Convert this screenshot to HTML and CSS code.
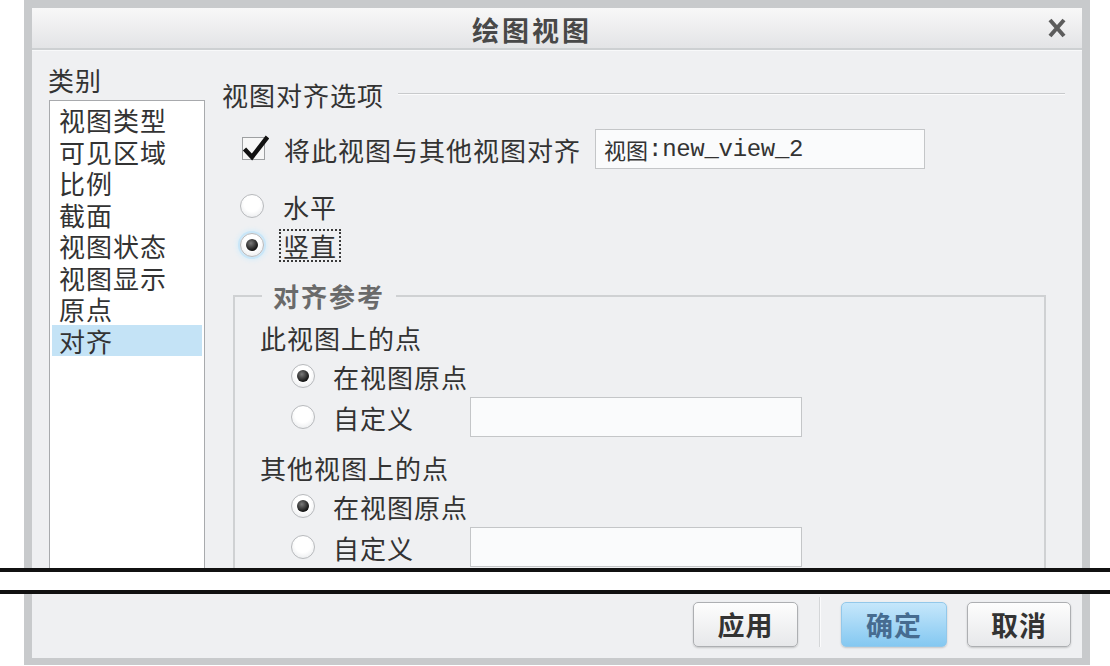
FILE: index.html
```html
<!DOCTYPE html>
<html lang="zh-CN">
<head>
    <meta charset="UTF-8">
    <title>绘图视图</title>
    <link rel="stylesheet" href="styles.css">
</head>
<body>
    <div class="dialog dialog-top">
        <div class="titlebar">
            <div class="title">绘图视图</div>
            <div class="close">
                <svg width="20" height="20" viewBox="0 0 20 20">
                    <path d="M3 2 L17 18 M17 2 L3 18" stroke="#5c5c5c" stroke-width="4" fill="none"/>
                </svg>
            </div>
        </div>
        <div class="content">
            <div class="sidebar">
                <div class="side-label">类别</div>
                <ul class="cat-list">
                    <li>视图类型</li>
                    <li>可见区域</li>
                    <li>比例</li>
                    <li>截面</li>
                    <li>视图状态</li>
                    <li>视图显示</li>
                    <li>原点</li>
                    <li class="selected">对齐</li>
                </ul>
            </div>
            <div class="main">
                <div class="section-head">
                    <span>视图对齐选项</span>
                    <div class="rule"></div>
                </div>
                <div class="check-row">
                    <svg class="checkbox" width="27" height="30" viewBox="0 0 27 30">
                        <rect x="0.5" y="3.5" width="22" height="22" fill="#f7f7f7" stroke="#9ea0a2"/>
                        <path d="M2.5 15 L10 23 L25.5 3" fill="none" stroke="#111" stroke-width="4.5"/>
                    </svg>
                    <span>将此视图与其他视图对齐</span>
                    <div class="field view-field"><span class="field-cjk">视图</span><span class="mono">:new_view_2</span></div>
                </div>
                <div class="radio-row first">
                    <span class="radio"></span>
                    <span>水平</span>
                </div>
                <div class="radio-row second">
                    <span class="radio on focus"></span>
                    <span class="focus-label">竖直</span>
                </div>
                <fieldset class="group">
                    <legend>对齐参考</legend>
                    <div class="group-label">此视图上的点</div>
                    <div class="opt-row">
                        <span class="radio on"></span>
                        <span class="opt-text">在视图原点</span>
                    </div>
                    <div class="opt-row input-row">
                        <span class="radio"></span>
                        <span class="opt-text">自定义</span>
                        <div class="field"></div>
                    </div>
                    <div class="group-label next">其他视图上的点</div>
                    <div class="opt-row">
                        <span class="radio on"></span>
                        <span class="opt-text">在视图原点</span>
                    </div>
                    <div class="opt-row input-row">
                        <span class="radio"></span>
                        <span class="opt-text">自定义</span>
                        <div class="field"></div>
                    </div>
                </fieldset>
            </div>
        </div>
    </div>

    <div class="cut"></div>

    <div class="dialog dialog-bottom">
        <div class="footer">
            <button class="btn">应用</button>
            <div class="btn-sep"></div>
            <button class="btn primary">确定</button>
            <button class="btn last">取消</button>
        </div>
    </div>
</body>
</html>
```

FILE: styles.css
```css
body {
    margin: 0;
    padding: 0;
    background: #fff;
    font-family: "Noto Sans CJK SC", "Liberation Sans", sans-serif;
    color: #333;
    width: 1110px;
    height: 666px;
    overflow: hidden;
}

.dialog {
    margin-left: 24px;
    width: 1066px;
    box-sizing: border-box;
    border-left: 8px solid #c8cacc;
    border-right: 8px solid #c8cacc;
    background: #eff0f2;
}

.dialog-top {
    height: 568px;
    border-top: 8px solid #c8cacc;
    overflow: hidden;
}

.dialog-bottom {
    height: 71px;
    border-bottom: 7px solid #c8cacc;
}

.titlebar {
    display: flex;
    height: 40px;
    border-bottom: 2px solid #cdd0d2;
    background: linear-gradient(#f8f8f8, #e3e4e6);
}

.title {
    flex: 1;
    text-align: center;
    font-size: 27px;
    font-weight: bold;
    line-height: 40px;
    letter-spacing: 3px;
    color: #484848;
    padding-top: 2px;
}

.close {
    width: 50px;
    display: flex;
    align-items: center;
    justify-content: center;
}

.content {
    display: flex;
    height: 518px;
    padding: 0 17px 0 16px;
    border-top: 1px solid #f8f9fa;
}

.sidebar {
    width: 157px;
    padding-top: 14px;
}

.side-label {
    font-size: 26px;
    line-height: 30px;
    letter-spacing: 1px;
}

.cat-list {
    list-style-type: none;
    margin: 5px 0 0 1px;
    padding: 3px 2px;
    height: 480px;
    background: #fff;
    border: 1px solid #a8aaad;
}

.cat-list li {
    height: 31.5px;
    line-height: 31.5px;
    padding-left: 7px;
    font-size: 26px;
    letter-spacing: 1px;
}

.cat-list li.selected {
    background: #c4e3f6;
}

.main {
    width: 843px;
    margin-left: 17px;
    padding-top: 28px;
    font-size: 26px;
    letter-spacing: 1px;
}

.section-head {
    display: flex;
    align-items: center;
    height: 30px;
}

.section-head .rule {
    flex: 1;
    margin-left: 14px;
    border-top: 1px solid #c8cacc;
    border-bottom: 1px solid #fbfbfc;
}

.check-row {
    display: flex;
    align-items: center;
    height: 40px;
    margin-top: 20px;
    padding-left: 20px;
}

.checkbox {
    margin-right: 15px;
}

.field {
    box-sizing: border-box;
    height: 40px;
    width: 332px;
    background: #fafbfc;
    border: 1px solid #c4c6c8;
}

.view-field {
    width: 330px;
    margin-left: 14px;
    display: flex;
    align-items: center;
    padding-left: 8px;
    letter-spacing: 0;
}

.field-cjk {
    font-size: 22px;
}

.mono {
    font-family: "Liberation Mono", monospace;
    font-size: 24px;
    letter-spacing: -0.3px;
}

.radio-row {
    display: flex;
    align-items: center;
    height: 36px;
    padding-left: 18px;
}

.radio-row.first {
    margin-top: 19px;
}

.radio-row.second {
    margin-top: 3px;
}

.radio-row .radio {
    margin-right: 19px;
}

.radio {
    display: inline-block;
    position: relative;
    flex: none;
    box-sizing: border-box;
    width: 24px;
    height: 24px;
    border-radius: 50%;
    border: 1px solid #b8babd;
    background: radial-gradient(circle at 50% 40%, #ffffff 45%, #e2e4e7 100%);
}

.radio.on::after {
    content: "";
    position: absolute;
    left: 5px;
    top: 5px;
    width: 12px;
    height: 12px;
    border-radius: 50%;
    background: radial-gradient(circle at 40% 35%, #7a7a7a, #141414 70%);
}

.radio.focus {
    box-shadow: 0 0 0 2px #c9e6f8, 0 0 5px 3px #d6edfa;
}

.focus-label {
    border: 2px dotted #3a3a3a;
    padding: 0 2px;
    line-height: 29px;
    margin-left: -4px;
}

.group {
    margin: 18px 19px 0 11px;
    padding: 9px 0 20px 0;
    border: 2px solid #cfd1d3;
    min-width: 0;
}

.group legend {
    margin-left: 27px;
    padding: 0 11px;
    line-height: 30px;
    font-weight: bold;
    color: #6a6a6a;
    letter-spacing: 2px;
}

.group-label {
    height: 36px;
    line-height: 36px;
    padding-left: 25px;
}

.group-label.next {
    margin-top: 13px;
}

.opt-row {
    display: flex;
    align-items: center;
    height: 38px;
    padding-left: 56px;
    margin-top: 1px;
}

.opt-row .radio {
    margin-right: 18px;
}

.opt-text {
    width: 137px;
}

.input-row {
    height: 40px;
    margin-top: 2px;
}

.cut {
    height: 18px;
    border-top: 4px solid #111;
    border-bottom: 4px solid #111;
    background: #fff;
}

.footer {
    display: flex;
    justify-content: flex-end;
    align-items: flex-start;
    padding: 8px 11px 0 0;
}

.btn {
    width: 105px;
    height: 45px;
    padding: 0;
    border: 1px solid #adafb2;
    border-radius: 5px;
    background: linear-gradient(#fdfdfd, #e7e8ea);
    box-shadow: 0 1px 2px rgba(0, 0, 0, 0.18);
    font-family: "Noto Sans CJK SC", sans-serif;
    font-size: 27px;
    font-weight: bold;
    letter-spacing: 1px;
    color: #333;
}

.btn.primary {
    width: 106px;
    background: linear-gradient(#c6e7fb, #84c8f1);
    border-color: #93c8ea;
    color: #466c90;
}

.btn.last {
    width: 104px;
    margin-left: 20px;
}

.btn-sep {
    width: 1px;
    height: 50px;
    margin: -5px 21px 0 21px;
    background: #d4d6d8;
    box-shadow: 1px 0 0 #fbfbfc;
}
```
